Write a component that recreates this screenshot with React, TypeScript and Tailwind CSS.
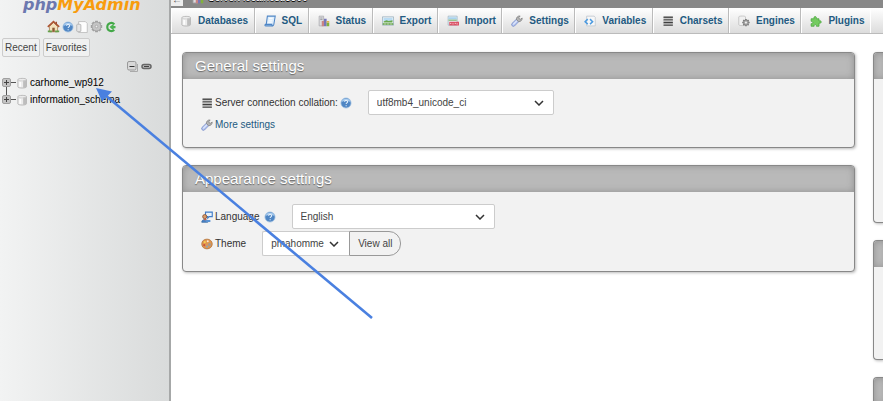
import type { ReactNode } from "react";

function Svg({ children, size = 12 }: { children: ReactNode; size?: number }) {
  return (
    <svg width={size} height={size} viewBox="0 0 16 16" fill="none" aria-hidden="true" className="shrink-0">
      {children}
    </svg>
  );
}

const DatabaseIcon = ({ size = 12 }: { size?: number }) => (
  <Svg size={size}>
    <path d="M2.500 3.500C2.500 1.300 14 1.300 14 3.500v9.500c0 2.300-11.500 2.300-11.500 0z" fill="#ececec" stroke="#a9a9a9" />
    <path d="M9.500 4.500v9.800c2.500 0 4-.5 4-1.300V4c-1 .4-2.500.5-4 .5z" fill="#bdbdbd" />
    <path d="M5.500 6.500V13" stroke="#fff" strokeWidth="2" />
    <path d="M3 4.500c2 1 8.500 1 10.500 0" stroke="#c9c9c9" />
  </Svg>
);
const SqlIcon = () => (
  <Svg>
    <path d="M4.500 1.500h10.500l-2 11.500c-.3 1.300-1 1.500-2 1.500H2.500c-1.500 0-1.800-1.500-.5-2h1z" fill="#dcecfb" stroke="#4f86c6" strokeWidth="1.400" />
    <path d="M2 12.500h8.500c0 1 .3 2 1.200 1.500" stroke="#4f86c6" strokeWidth="1.400" />
    <path d="M6.500 4.500h5M6 7h5M5.500 9.500h5" stroke="#f7fbff" strokeWidth="1.500" />
  </Svg>
);
const StatusIcon = () => (
  <Svg>
    <path d="M1.500 1.500h6v13h-6z" fill="#dcdcdf" stroke="#a9a9ad" />
    <path d="M3 4h3M3 6h3" stroke="#8f8f95" />
    <path d="M5 8h3v7H5z" fill="#c98383" />
    <path d="M8 5h3.500v10H8z" fill="#7777b8" />
    <path d="M11.500 10H15v5h-3.500z" fill="#82b13c" />
    <path d="M11.500 8H15v2h-3.500z" fill="#e0b04b" />
  </Svg>
);
const ExportIcon = () => (
  <Svg>
    <path d="M.5 2.500h15v11H.5z" fill="#f0f7fb" stroke="#8fa8b8" />
    <path d="M2 4h12v4H2z" fill="#b9dcf3" />
    <path d="M2 8.500l4-1.500 3 1 5-1v3H2z" fill="#6aa84c" />
    <path d="M1 11h14v2H1z" fill="#5c9b3c" />
    <path d="M3 12h2M7 12h2M11 12h2" stroke="#d9efcf" />
  </Svg>
);
const ImportIcon = () => (
  <Svg>
    <path d="M1.500 1.500h12v12h-12z" fill="#edf5fa" stroke="#9bb3c2" />
    <path d="M2 3h11v3H2z" fill="#a9d2ee" />
    <path d="M2 6h11v2H2z" fill="#9cc48e" />
    <path d="M3 9h13v5H3z" fill="#dc5366" />
    <path d="M5 12V10.500M8 12.500V11M11 12v-1.500M13.500 12.500V11" stroke="#fff" />
  </Svg>
);
const WrenchIcon = () => (
  <Svg>
    <path d="M1.300 11.300L7.200 5.600l3.200 3.200-5.800 5.900c-2 1.600-5-1.300-3.300-3.400z" fill="#b3c4f0" stroke="#7287c4" />
    <path d="M3 12.500l5-5" stroke="#e3eafc" strokeWidth="1.500" />
    <path d="M7.300 6.300C6.800 3.300 9 1 12.200 1.300L10.600 3.300l.4 1.900 1.900.4 2-1.600c.2 3-2.200 5.300-5 4.800z" fill="#b5b5b5" stroke="#7d7d7d" />
  </Svg>
);
const VariablesIcon = () => (
  <Svg>
    <path d="M3.500 1.500h10l1.500 1.500v11.500H3.500z" fill="#f7f7f7" stroke="#b9c3cc" />
    <path d="M5 5.500L1.500 9 5 12.200M8 5.500L11.500 9 8 12.200" stroke="#4d9be0" strokeWidth="2" />
  </Svg>
);
const CharsetsIcon = () => (
  <Svg>
    <path d="M2 3h12.500M2 6.500h12.500M2 10h12.500M2 13.500h12.500" stroke="#3f3f3f" strokeWidth="1.800" />
    <path d="M2 4.300h12.500M2 7.800h12.500M2 11.300h12.500" stroke="#a4a4a4" />
  </Svg>
);
const gearTeeth = "M8 1v14M1 8h14M3 3l10 10M13 3L3 13";
const EnginesIcon = () => (
  <Svg>
    <path d="M1 2.500C1 1 10 1 10 2.500V13c0 1.500-9 1.500-9 0z" fill="#f0f0f0" stroke="#bcbcbc" />
    <g transform="translate(5 4.500) scale(.7)">
      <path d={gearTeeth} stroke="#777" strokeWidth="3" />
      <circle cx="8" cy="8" r="5" fill="#a2a2a2" stroke="#777" />
      <circle cx="8" cy="8" r="2" fill="#eee" />
    </g>
  </Svg>
);
const PluginsIcon = () => (
  <Svg>
    <path d="M1.500 5h4C4 1 9.500 1 8.500 5h3.500v3c4-1.500 4 4 0 2.800V15H8.500c.8-3-3.500-3-3 0h-4v-3.500c3 .5 3-3.500 0-3z" fill="#74cb60" stroke="#48a53c" />
  </Svg>
);
const HomeIcon = () => (
  <Svg size={13}>
    <path d="M3 8v6.500h10V8L8 3z" fill="#f3e2bd" stroke="#a88458" />
    <path d="M1 8.500L8 2l7 6.500" stroke="#ad5634" strokeWidth="2" />
    <path d="M11.500 2v3" stroke="#9c4d32" strokeWidth="1.600" />
    <path d="M6.500 9.500h3v5h-3z" fill="#8b5a35" />
    <path d="M1 14h5M10 14h5" stroke="#65a04a" strokeWidth="2" />
  </Svg>
);
const HelpIcon = () => (
  <Svg>
    <circle cx="8" cy="8" r="6.800" fill="#4f86c4" stroke="#a8c5e3" />
    <path d="M3 6C4.500 2.500 11.500 2.500 13 6" stroke="#a9cdf0" strokeWidth="2" />
    <path d="M6 6.300c0-2.300 4.200-2.300 4.200 0 0 1.500-2 1.500-2 3M8.200 11v1.400" stroke="#e3effb" strokeWidth="1.500" />
  </Svg>
);
const DocIcon = () => (
  <Svg>
    <path d="M3.500.8h9L15 3.300v12H3.500z" fill="#fdfdfd" stroke="#b4b4b4" />
    <path d="M1 5c0-1 5.500-1 5.500 0v8.500c0 1-5.500 1-5.500 0z" fill="#e5e5e5" stroke="#a9a9a9" />
  </Svg>
);
const GearIcon = () => (
  <Svg size={13}>
    <path d={gearTeeth} stroke="#a0a0a0" strokeWidth="3.500" />
    <circle cx="8" cy="8" r="5.500" fill="#c4c4c4" stroke="#a0a0a0" />
    <circle cx="8" cy="8" r="1.600" fill="#eee" stroke="#a4a4a4" />
  </Svg>
);
const ReloadIcon = () => (
  <Svg>
    <path d="M12.500 4.500C9 .5 3 3 3 8s5.500 7 9.500 4" stroke="#43a848" strokeWidth="2.800" />
    <path d="M6 8l5.500-4.500V6.500H14v3h-2.500v3z" fill="#4db352" />
  </Svg>
);
const LanguageIcon = () => (
  <Svg>
    <path d="M6 1.500h9v6h-4l-2 2v-2H6z" fill="#e8f2fc" stroke="#3f7cc8" strokeWidth="1.500" />
    <circle cx="5" cy="7.500" r="2.800" fill="#d99a68" stroke="#7d4a2c" />
    <path d="M1 15c0-5 8-5 8 0z" fill="#4a84c9" stroke="#33659e" />
    <path d="M5 12h7.500v2.500H7z" fill="#5a93d4" />
    <path d="M4 11.500h3" stroke="#d4573b" strokeWidth="1.500" />
  </Svg>
);
const ThemeIcon = () => (
  <Svg>
    <path d="M8 1.500c4 0 7 2.800 7 6.500s-3 6.500-7 6.500S1 12 1 8s3-6.500 7-6.500z" fill="#e0964f" stroke="#b0713a" />
    <circle cx="5" cy="5.500" r="1.400" fill="#f5d04f" />
    <circle cx="9" cy="4.300" r="1.300" fill="#fbe9d6" />
    <circle cx="4.300" cy="9.500" r="1.400" fill="#c84f3f" />
    <circle cx="8" cy="11.500" r="1.400" fill="#8fa3b5" />
    <path d="M9.500 7.500c2-2 4.500 0 3.500 2.500-1 2.500-4.500 0-3.500-2.500z" fill="#a09a96" />
  </Svg>
);

const tabs: { label: string; icon: ReactNode }[] = [
  { label: "Databases", icon: <DatabaseIcon /> },
  { label: "SQL", icon: <SqlIcon /> },
  { label: "Status", icon: <StatusIcon /> },
  { label: "Export", icon: <ExportIcon /> },
  { label: "Import", icon: <ImportIcon /> },
  { label: "Settings", icon: <WrenchIcon /> },
  { label: "Variables", icon: <VariablesIcon /> },
  { label: "Charsets", icon: <CharsetsIcon /> },
  { label: "Engines", icon: <EnginesIcon /> },
  { label: "Plugins", icon: <PluginsIcon /> },
];

const shortcuts: { label: string; icon: ReactNode }[] = [
  { label: "Home", icon: <HomeIcon /> },
  { label: "Documentation", icon: <HelpIcon /> },
  { label: "SQL documentation", icon: <DocIcon /> },
  { label: "Panel settings", icon: <GearIcon /> },
  { label: "Reload", icon: <ReloadIcon /> },
];

function TreeRow({ name, last = false }: { name: string; last?: boolean }) {
  return (
    <li className="flex h-[17px] items-center">
      <button aria-label={`Expand ${name}`} className="flex h-[17px] shrink-0 items-center">
        <svg width="14" height="17" viewBox="0 0 14 17" aria-hidden="true">
          <path d={last ? "M4.500 0v5" : "M4.500 12v5"} stroke="#555" />
          <path d="M9 8.500h5" stroke="#555" />
          <rect x=".5" y="4.500" width="8" height="8" rx="1.500" fill="#c4c4c4" stroke="#a0a0a0" />
          <path d="M2 8.500h5M4.500 6v5" stroke="#444" />
        </svg>
      </button>
      <DatabaseIcon size={12} />
      <a href="#db" className="ml-0.5 text-black">{name}</a>
    </li>
  );
}

function Sidebar() {
  return (
    <aside className="w-[171px] shrink-0 border-r-2 border-[#a6a8a8] bg-linear-to-r from-[#f2f3f3] to-[#d9dbdb]">
      <div className="h-[19px] overflow-hidden">
        <a
          href="#home"
          className="-mt-2 block pl-[23px] font-['DejaVu_Sans',sans-serif] text-base leading-[26px] font-bold whitespace-nowrap italic"
        >
          <span className="text-[#6c78af]">php</span>
          <span className="text-[#f89c0e]">MyAdmin</span>
        </a>
      </div>
      <nav className="flex h-[15px] items-center gap-0.5 pl-[47px]">
        {shortcuts.map((s) => (
          <a key={s.label} href="#shortcut" aria-label={s.label}>{s.icon}</a>
        ))}
      </nav>
      <div className="mt-1 flex gap-[3px] pl-0.5 text-[#444]">
        <button className="h-[19px] rounded-xs border border-[#ccc] bg-[#f0f1f1] px-0.5">Recent</button>
        <button className="h-[19px] rounded-xs border border-[#ccc] bg-[#f0f1f1] px-0.5">Favorites</button>
      </div>
      <div className="mt-1 flex h-[11px] items-center justify-end gap-[3px] pr-[17px]">
        <button aria-label="Collapse all">
          <svg width="11" height="11" viewBox="0 0 11 11" fill="none" className="block" aria-hidden="true">
            <path d="M3 10.500h7.500V3" stroke="#aaa" />
            <rect x=".5" y=".5" width="8.500" height="8.500" rx="1.500" fill="#d8d8d8" stroke="#999" />
            <path d="M2.500 5.500h5" stroke="#333" />
          </svg>
        </button>
        <button aria-label="Link with main panel">
          <svg width="11" height="11" viewBox="0 0 11 11" fill="none" className="block" aria-hidden="true">
            <rect x="1" y="3.500" width="9" height="4" rx="2" fill="#bbb" stroke="#666" strokeWidth="1.500" />
            <path d="M3 5.500h5" stroke="#444" />
          </svg>
        </button>
      </div>
      <ul className="mt-[2px] pl-0.5">
        <TreeRow name="carhome_wp912" />
        <TreeRow name="information_schema" last />
      </ul>
    </aside>
  );
}

function Card({ title, children, cut = false, body }: { title?: string; children?: ReactNode; cut?: boolean; body: string }) {
  return (
    <section
      className={
        cut
          ? "rounded-l border border-r-0 border-[#888] bg-[#f2f2f2] shadow-[1px_1px_3px_#bbb]"
          : "rounded border border-[#888] bg-[#f2f2f2] shadow-[1px_1px_3px_#bbb]"
      }
    >
      <h2 className="h-[26px] rounded-t-[3px] bg-[#b9b9b9] pl-3 text-[15px] leading-[25px] text-white shadow-[inset_0_0_7px_#919191] [text-shadow:0_1px_1px_#666]">
        {title}
      </h2>
      <div className={body}>{children}</div>
    </section>
  );
}

function Select({ id, value, width, square = false }: { id: string; value: string; width: string; square?: boolean }) {
  return (
    <span className={`relative block ${width}`}>
      <select
        id={id}
        className={
          square
            ? "h-[25px] w-full appearance-none rounded-l-xs border border-r-0 border-[#ccc] bg-white px-2 text-[#444]"
            : "h-[25px] w-full appearance-none rounded-xs border border-[#ccc] bg-white px-2 text-[#444]"
        }
      >
        <option>{value}</option>
      </select>
      <svg
        width="10" height="6" viewBox="0 0 10 6" fill="none" aria-hidden="true"
        className="pointer-events-none absolute top-[10px] right-[10px]"
      >
        <path d="M1 1l4 4 4-4" stroke="#333" strokeWidth="1.500" />
      </svg>
    </span>
  );
}

function Arrow() {
  return (
    <svg
      width="280" height="234" viewBox="0 0 280 234" aria-hidden="true"
      className="pointer-events-none absolute top-[86px] left-[94px]"
    >
      <path d="M11 9L278 232" stroke="#4a80e0" strokeWidth="2.600" />
      <path d="M2 2l16 3.500L8 15.500z" fill="#4a80e0" />
    </svg>
  );
}

export default function App() {
  return (
    <div className="relative flex min-h-screen overflow-hidden bg-white font-['Liberation_Sans',Arial,sans-serif] text-[10px] leading-3 text-[#333]">
      <Sidebar />
      <div className="min-w-0 flex-1">
        <header className="flex h-2 overflow-hidden bg-[#888] text-white">
          <button aria-label="Hide panel" className="-mt-1.5 h-3 w-3 shrink-0 bg-[#eee] text-[#555]">←</button>
          <div className="-mt-2 ml-[9px] flex h-3 items-center gap-1 [text-shadow:0_1px_0_#000]">
            <StatusIcon />
            <span>Server: localhost:3306</span>
          </div>
        </header>
        <nav className="flex h-[26px] overflow-hidden border-b border-[#bbb] bg-linear-to-b from-white to-[#dcdcdc] pr-3">
          {tabs.map((t) => (
            <a
              key={t.label}
              href="#tab"
              className="flex shrink-0 grow items-center gap-1.5 border-r border-l border-r-[#bbb] border-l-white pr-[5px] pl-2 font-bold text-[#235a81] last:border-r-white"
            >
              {t.icon}
              {t.label}
            </a>
          ))}
        </nav>
        <main className="flex gap-[18px] pt-[18px] pl-[11px]">
          <div className="flex min-w-0 flex-1 flex-col gap-[17px]">
            <Card title="General settings" body="px-[18px] pt-[11px] pb-3">
              <div className="flex items-center">
                <CharsetsIcon />
                <label htmlFor="collation" className="ml-0.5">Server connection collation:</label>
                <a href="#help" aria-label="Help" className="mr-4 ml-0.5"><HelpIcon /></a>
                <Select id="collation" value="utf8mb4_unicode_ci" width="w-[186px]" />
              </div>
              <a href="#more" className="flex h-5 items-center gap-0.5 text-[#235a81]">
                <WrenchIcon />
                More settings
              </a>
            </Card>
            <Card title="Appearance settings" body="flex flex-col gap-0.5 px-[18px] pt-3 pb-[15px]">
              <div className="flex items-center">
                <LanguageIcon />
                <label htmlFor="language" className="ml-0.5">Language</label>
                <a href="#help" aria-label="Help" className="mr-4 ml-1"><HelpIcon /></a>
                <Select id="language" value="English" width="w-[203px]" />
              </div>
              <div className="flex items-center">
                <ThemeIcon />
                <label htmlFor="theme" className="mr-4 ml-0.5">Theme</label>
                <Select id="theme" value="pmahomme" width="w-[87px]" square />
                <button className="h-[25px] rounded-r-xl border border-[#999] bg-[#f2f2f2] px-2 text-[#444]">View all</button>
              </div>
            </Card>
          </div>
          <div className="flex w-2.5 shrink-0 flex-col gap-[17px]">
            <Card cut body="h-[143px]" />
            <Card cut body="h-[92px]" />
            <Card cut body="h-0" />
          </div>
        </main>
      </div>
      <Arrow />
    </div>
  );
}
